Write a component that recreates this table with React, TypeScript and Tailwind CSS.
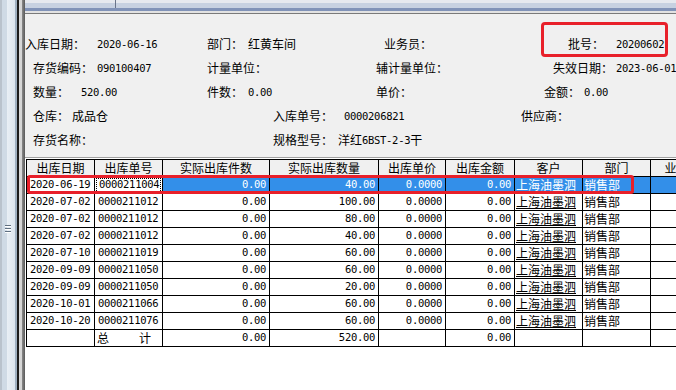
import React from 'react';

const cjk = "font-['Noto_Sans_CJK_SC',sans-serif] text-[12px]";
const mono = "font-['DejaVu_Sans_Mono',monospace] text-[10.5px] tracking-[-0.3px]";

type Row = [string, string, string, string];

const rows: Row[] = [
  ['2020-06-19', '0000211004', '0.00', '40.00'],
  ['2020-07-02', '0000211012', '0.00', '100.00'],
  ['2020-07-02', '0000211012', '0.00', '80.00'],
  ['2020-07-02', '0000211012', '0.00', '40.00'],
  ['2020-07-10', '0000211019', '0.00', '60.00'],
  ['2020-09-09', '0000211050', '0.00', '60.00'],
  ['2020-09-09', '0000211050', '0.00', '20.00'],
  ['2020-10-01', '0000211066', '0.00', '60.00'],
  ['2020-10-20', '0000211076', '0.00', '60.00'],
];

const headers = ['出库日期', '出库单号', '实际出库件数', '实际出库数量', '出库单价', '出库金额', '客户', '部门', '业务员'];

function Label({ w, children }: { w: string; children: React.ReactNode }) {
  return <span className={`${w} shrink-0 whitespace-nowrap ${cjk}`}>{children}</span>;
}

function Value({ w, children }: { w: string; children: React.ReactNode }) {
  return <span className={`${w} shrink-0 whitespace-nowrap ${mono}`}>{children}</span>;
}

function Splitter() {
  return (
    <div className="flex h-full w-[25px] shrink-0">
      <div className="w-[2px] bg-[#b9c2cc]" />
      <div className="w-[5px] bg-[#cfdae5]" />
      <div className="flex w-[8px] flex-col bg-gradient-to-r from-[#e9eff5] to-[#dbe4ed] pt-[225px]">
        <svg width="8" height="9" viewBox="0 0 8 9" className="-ml-[2px]">
          <rect x="0" y="0" width="6" height="1" fill="#5f6f80" />
          <rect x="0" y="3" width="6" height="1" fill="#5f6f80" />
          <rect x="0" y="6" width="6" height="1" fill="#5f6f80" />
          <rect x="0" y="1" width="6" height="1" fill="#ffffff" />
          <rect x="0" y="4" width="6" height="1" fill="#ffffff" />
          <rect x="0" y="7" width="6" height="1" fill="#ffffff" />
        </svg>
      </div>
      <div className="w-[2px] bg-[#9eafc0]" />
      <div className="w-[2px] bg-[#1a1a1a]" />
      <div className="w-[3px] bg-[#d6d6d6]" />
      <div className="w-[3px] bg-gradient-to-r from-[#8a8a8a] to-[#5a5a5a]" />
    </div>
  );
}

function FormPanel() {
  return (
    <div className="relative h-[145px] shrink-0 border-t border-b border-t-[#7a7a7a] border-b-[#a0a0a0] bg-[#f0f0f0] pt-[18px] leading-[24px] text-black">
      <div className="flex h-[24px] items-center">
        <Label w="w-[72px]">入库日期：</Label>
        <Value w="w-[110px]">2020-06-16</Value>
        <Label w="w-[41px]">部门：</Label>
        <Label w="w-[136px]">红黄车间</Label>
        <Label w="w-[184px]">业务员：</Label>
        <Label w="w-[48px]">批号：</Label>
        <Value w="w-[60px]">20200602</Value>
      </div>
      <div className="flex h-[24px] items-center pl-[8px]">
        <Label w="w-[64px]">存货编码：</Label>
        <Value w="w-[110px]">090100407</Value>
        <Label w="w-[169px]">计量单位：</Label>
        <Label w="w-[177px]">辅计量单位：</Label>
        <Label w="w-[63px]">失效日期：</Label>
        <Value w="w-[70px]">2023-06-01</Value>
      </div>
      <div className="flex h-[24px] items-center pl-[8px]">
        <Label w="w-[48px]">数量：</Label>
        <Value w="w-[126px]">520.00</Value>
        <Label w="w-[41px]">件数：</Label>
        <Value w="w-[128px]">0.00</Value>
        <Label w="w-[168px]">单价：</Label>
        <Label w="w-[40px]">金额：</Label>
        <Value w="w-[40px]">0.00</Value>
      </div>
      <div className="flex h-[24px] items-center pl-[8px]">
        <Label w="w-[39px]">仓库：</Label>
        <Label w="w-[201px]">成品仓</Label>
        <Label w="w-[71px]">入库单号：</Label>
        <Value w="w-[177px]">0000206821</Value>
        <Label w="w-[60px]">供应商：</Label>
      </div>
      <div className="flex h-[24px] items-center pl-[8px]">
        <Label w="w-[240px]">存货名称：</Label>
        <Label w="w-[65px]">规格型号：</Label>
        <span className="flex items-center whitespace-nowrap">
          <span className={cjk}>洋红</span>
          <span className={mono}>6BST-2-3</span>
          <span className={cjk}>干</span>
        </span>
      </div>

      <div className="absolute left-[516px] top-[8px] h-[35px] w-[127px] rounded-[4px] border-[3px] border-[#e8202a]" />
    </div>
  );
}

function DataTable() {
  const cell = 'h-[17px] border-b border-r border-black overflow-hidden whitespace-nowrap flex items-center';

  return (
    <div className="relative ml-[1px] mt-[1px] grid w-max grid-cols-[68px_68px_107px_109px_67px_69px_68px_68px_64px] border-l border-t border-black text-black">
      {headers.map((h) => (
        <div key={h} className={`${cell} justify-center bg-[#f0f0f0] ${cjk}`}>
          {h}
        </div>
      ))}

      {rows.map((r, i) => {
        const sel = i === 0;
        const blue = sel ? 'bg-[#338fe9] text-white' : 'bg-white';
        return (
          <React.Fragment key={i}>
            <div className={`${cell} bg-white pl-[3px] ${mono}`}>{r[0]}</div>
            <div className={`${cell} bg-white pl-[1px] ${mono}`}>
              {sel ? (
                <span className="flex h-[15px] w-[65px] items-center border border-dotted border-black pl-[2px]">{r[1]}</span>
              ) : (
                <span className="pl-[2px]">{r[1]}</span>
              )}
            </div>
            <div className={`${cell} justify-end pr-[3px] ${blue} ${mono}`}>{r[2]}</div>
            <div className={`${cell} justify-end pr-[3px] ${blue} ${mono}`}>{r[3]}</div>
            <div className={`${cell} justify-end pr-[3px] ${blue} ${mono}`}>0.0000</div>
            <div className={`${cell} justify-end pr-[3px] ${blue} ${mono}`}>0.00</div>
            <div className={`${cell} pl-[1px] ${blue} ${cjk}`}>
              <span className="underline decoration-1 underline-offset-[1px]">上海油墨泗</span>
            </div>
            <div className={`${cell} pl-[1px] ${blue} ${cjk}`}>销售部</div>
            <div className={`${cell} ${blue}`} />
          </React.Fragment>
        );
      })}

      <div className={`${cell} bg-white`} />
      <div className={`${cell} justify-between bg-white pl-[2px] pr-[11px] ${cjk}`}>
        <span>总</span>
        <span>计</span>
      </div>
      <div className={`${cell} justify-end bg-white pr-[3px] ${mono}`}>0.00</div>
      <div className={`${cell} justify-end bg-white pr-[3px] ${mono}`}>520.00</div>
      <div className={`${cell} bg-white`} />
      <div className={`${cell} justify-end bg-white pr-[3px] ${mono}`}>0.00</div>
      <div className={`${cell} bg-white`} />
      <div className={`${cell} bg-white`} />
      <div className={`${cell} bg-white`} />

      <div className="absolute left-0 top-[15px] h-[19px] w-[607px] rounded-[3px] border-[3px] border-[#e8202a]" />
    </div>
  );
}

export default function App() {
  return (
    <div className="flex h-[390px] w-[676px] overflow-hidden bg-white">
      <Splitter />
      <div className="flex min-w-0 flex-1 flex-col overflow-hidden">
        <div className="flex h-[13px] shrink-0 flex-col">
          <div className="relative h-[3px] bg-[#e6e9ef]">
            <div className="absolute left-[90px] top-0 h-[8px] w-px bg-[#6a7489]" />
          </div>
          <div className="h-[5px] bg-[#c7d1e1]" />
          <div className="h-[3px] bg-[#8193b8]" />
          <div className="h-[2px] bg-[#e2e2e2]" />
        </div>
        <FormPanel />
        <div className="flex-1 bg-white">
          <DataTable />
        </div>
      </div>
    </div>
  );
}
